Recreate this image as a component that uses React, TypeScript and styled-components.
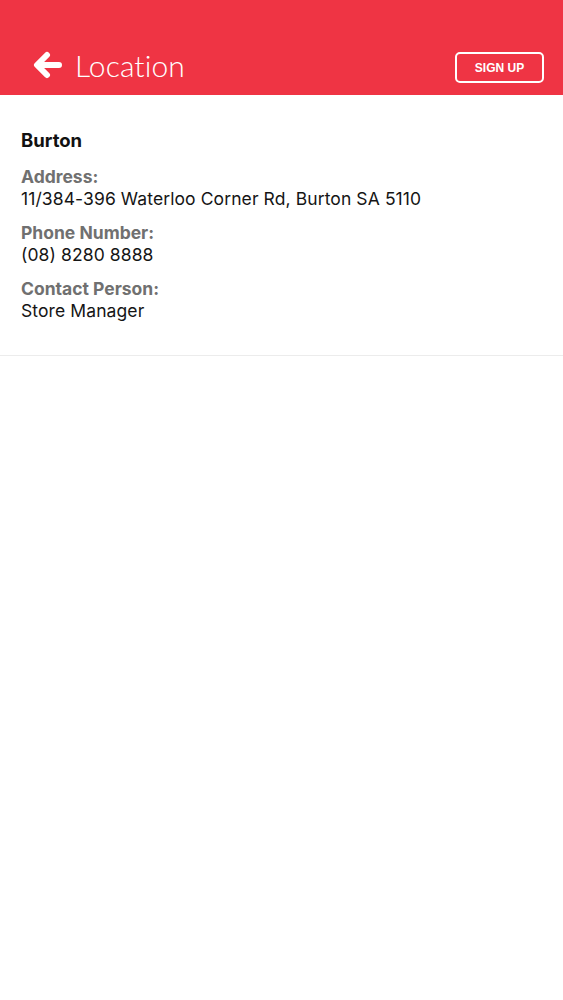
import React from 'react';
import styled, { createGlobalStyle } from 'styled-components';

const GlobalStyle = createGlobalStyle`
  html, body {
    margin: 0;
    padding: 0;
    background: #ffffff;
  }
  body {
    font-family: "Inter", "Liberation Sans", sans-serif;
  }
`;

const Page = styled.div`
  width: 563px;
  min-height: 1000px;
  background: #ffffff;
`;

const Header = styled.header`
  height: 95px;
  background: #ef3444;
  display: flex;
  align-items: flex-end;
  justify-content: space-between;
  padding: 0 19px 12px 33px;
  box-sizing: border-box;
`;

const TitleGroup = styled.div`
  display: flex;
  align-items: center;
  gap: 12px;
`;

const BackButton = styled.button`
  border: none;
  background: none;
  padding: 0;
  display: flex;
  cursor: pointer;
`;

const Title = styled.h1`
  margin: 0;
  font-family: "Lato", "Liberation Sans", sans-serif;
  font-weight: 300;
  font-size: 30px;
  color: #ffffff;
  letter-spacing: 0.1px;
`;

const SignUpButton = styled.button`
  width: 89px;
  height: 31px;
  border: 2px solid #ffffff;
  border-radius: 5px;
  background: transparent;
  color: #ffffff;
  font-family: "Liberation Sans", "Inter", sans-serif;
  font-weight: 700;
  font-size: 12px;
  box-sizing: border-box;
  cursor: pointer;
`;

const Card = styled.section`
  padding: 34px 21px 33px;
  border-bottom: 1px solid #ececec;
`;

const StoreName = styled.h2`
  margin: 0 0 15px;
  font-size: 18.5px;
  line-height: 22px;
  font-weight: 700;
  color: #111111;
`;

const Field = styled.div`
  margin-bottom: 12px;
  &:last-child {
    margin-bottom: 0;
  }
`;

const Label = styled.div`
  font-size: 17.5px;
  font-weight: 700;
  color: #707070;
  line-height: 22px;
`;

const Value = styled.div`
  font-size: 17.5px;
  font-weight: 400;
  color: #151515;
  line-height: 22px;
  letter-spacing: 0.1px;
`;

const ArrowIcon = () => (
  <svg width="30" height="28" viewBox="0 0 30 28" fill="none">
    <path
      d="M26 14 H5 M14 4 L4 14 L14 24"
      stroke="#ffffff"
      strokeWidth="6"
      strokeLinecap="round"
      strokeLinejoin="round"
    />
  </svg>
);

const fields = [
  { label: 'Address:', value: '11/384-396 Waterloo Corner Rd, Burton SA 5110' },
  { label: 'Phone Number:', value: '(08) 8280 8888' },
  { label: 'Contact Person:', value: 'Store Manager' },
];

const App = () => (
  <Page>
    <GlobalStyle />
    <Header>
      <TitleGroup>
        <BackButton aria-label="Back">
          <ArrowIcon />
        </BackButton>
        <Title>Location</Title>
      </TitleGroup>
      <SignUpButton>SIGN UP</SignUpButton>
    </Header>
    <Card>
      <StoreName>Burton</StoreName>
      {fields.map((f) => (
        <Field key={f.label}>
          <Label>{f.label}</Label>
          <Value>{f.value}</Value>
        </Field>
      ))}
    </Card>
  </Page>
);

export default App;
